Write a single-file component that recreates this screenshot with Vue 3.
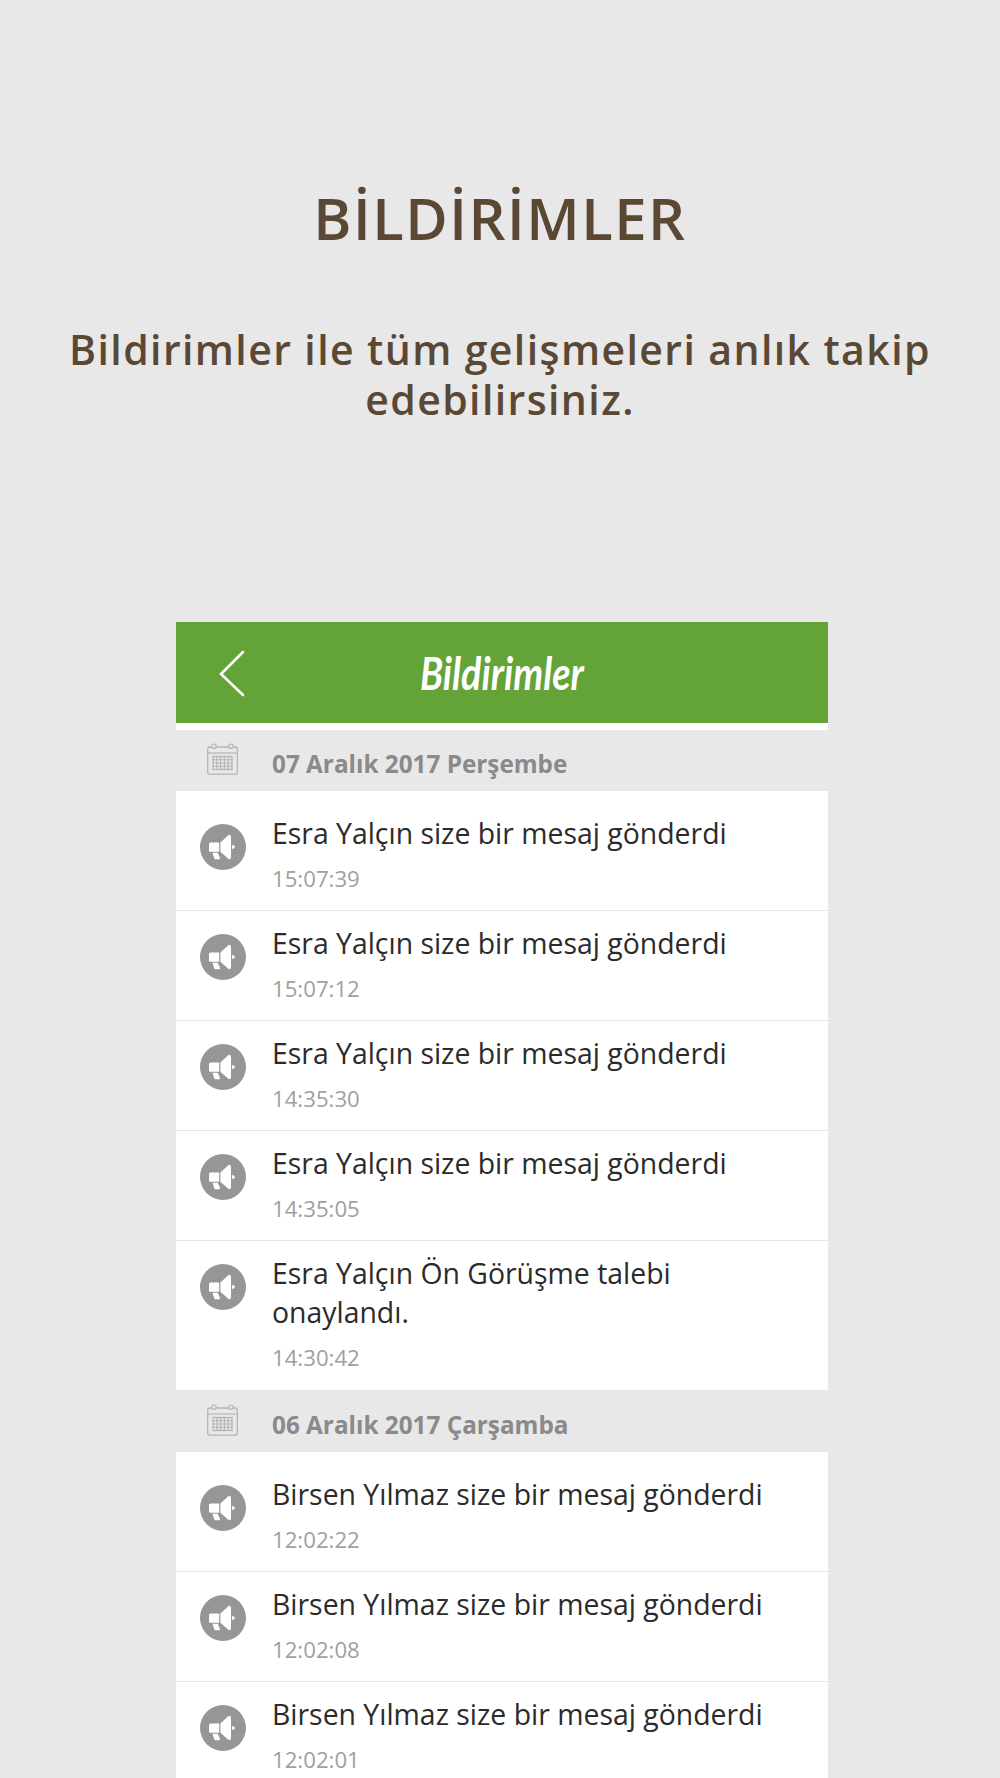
<script setup>
const groups = [
  {
    date: '07 Aralık 2017 Perşembe',
    items: [
      { text: 'Esra Yalçın size bir mesaj gönderdi', time: '15:07:39' },
      { text: 'Esra Yalçın size bir mesaj gönderdi', time: '15:07:12' },
      { text: 'Esra Yalçın size bir mesaj gönderdi', time: '14:35:30' },
      { text: 'Esra Yalçın size bir mesaj gönderdi', time: '14:35:05' },
      { text: 'Esra Yalçın Ön Görüşme talebi onaylandı.', time: '14:30:42' },
    ],
  },
  {
    date: '06 Aralık 2017 Çarşamba',
    items: [
      { text: 'Birsen Yılmaz size bir mesaj gönderdi', time: '12:02:22' },
      { text: 'Birsen Yılmaz size bir mesaj gönderdi', time: '12:02:08' },
      { text: 'Birsen Yılmaz size bir mesaj gönderdi', time: '12:02:01' },
    ],
  },
]
</script>

<template>
  <div class="page">
    <h1 class="title">BİLDİRİMLER</h1>
    <p class="subtitle">Bildirimler ile tüm gelişmeleri anlık takip edebilirsiniz.</p>
    <div class="phone">
      <header class="bar">
        <svg class="back" width="30" height="48" viewBox="0 0 30 48">
          <path d="M25 3 L3 25 L25 46" fill="none" stroke="#fff" stroke-width="2.6" stroke-linecap="round" stroke-linejoin="miter" />
        </svg>
        <span class="bar-title">Bildirimler</span>
      </header>
      <section v-for="g in groups" :key="g.date">
        <div class="date">
          <svg class="cal" width="31" height="32" viewBox="0 0 31 32" fill="none" stroke="#b4b4b6">
            <path d="M3 4 H28 Q30.4 4 30.4 6.5 V29 Q30.4 31.2 28 31.2 H3 Q0.7 31.2 0.7 29 V6.5 Q0.7 4 3 4 Z" stroke-width="1.3" />
            <path d="M0.7 10 H30.4" stroke-width="1.2" />
            <circle cx="7" cy="3.2" r="2.2" fill="#e8e8e9" stroke-width="1.2" />
            <circle cx="24" cy="3.2" r="2.2" fill="#e8e8e9" stroke-width="1.2" />
            <rect x="6" y="13.5" width="19" height="13" stroke-width="1.3" />
            <path d="M6 16.75 H25 M6 20 H25 M6 23.25 H25 M9.8 13.5 V26.5 M13.6 13.5 V26.5 M17.4 13.5 V26.5 M21.2 13.5 V26.5" stroke-width="1.1" />
          </svg>
          <span class="date-text">{{ g.date }}</span>
        </div>
        <div class="list">
          <article v-for="(it, i) in g.items" :key="i" class="row">
            <span class="badge">
              <svg width="46" height="46" viewBox="-23 -23 46 46">
                <path d="M-12.5 -4.5 H-3.8 V4.8 H-12.5 Q-14 4.8 -14 3.4 V-3 Q-14 -4.5 -12.5 -4.5 Z" fill="#fff" />
                <path d="M-2.6 -4.5 L5 -11.5 Q7.4 -13.2 8 -10.5 V10.5 Q7.4 13.2 5 11.5 L-2.6 4.8 Z" fill="#fff" />
                <path d="M9 -2 Q12 -1.6 12 0 Q12 1.6 9 2 Z" fill="#fff" />
                <path d="M-10.5 5.8 H-5.2 L-3 11 Q-2.8 12.2 -4 12.2 H-7.6 Q-8.6 12.2 -8.8 11.2 Z" fill="#fff" />
              </svg>
            </span>
            <div class="body">
              <div class="text">{{ it.text }}</div>
              <div class="time">{{ it.time }}</div>
            </div>
          </article>
        </div>
      </section>
    </div>
  </div>
</template>

<style>
html, body { margin: 0; height: 1778px; overflow: hidden; background: #e8e8e9; }
</style>

<style scoped>
.page {
  height: 1778px;
  overflow: hidden;
  background: #e8e8e9;
  font-family: "Open Sans", sans-serif;
  display: flex;
  flex-direction: column;
  align-items: center;
}
.title {
  margin: 175px 0 0;
  font-size: 58px;
  line-height: 86px;
  font-weight: 600;
  letter-spacing: 1.5px;
  color: #5a4835;
}
.subtitle {
  margin: 63px 0 0;
  width: 900px;
  text-align: center;
  font-size: 41px;
  line-height: 50px;
  font-weight: 600;
  letter-spacing: 1.4px;
  color: #5a4835;
}
.phone {
  margin-top: 198px;
  margin-left: 4px;
  width: 652px;
  flex: none;
}
.bar {
  height: 101px;
  background: #63a337;
  border-bottom: 7px solid #fff;
  display: flex;
  align-items: center;
  justify-content: center;
  position: relative;
}
.back { position: absolute; left: 42px; top: 27px; }
.bar-title {
  display: inline-block;
  font-family: "Lato", sans-serif;
  font-style: italic;
  font-weight: 700;
  font-size: 46px;
  color: #fff;
  transform: scaleX(0.82);
}
.date {
  height: 61px;
  display: flex;
  align-items: center;
  padding-left: 31px;
  gap: 34px;
  background: #e8e8e9;
}
.cal { flex: none; margin-top: -4px; }
.date-text {
  font-size: 24.3px;
  font-weight: 700;
  color: #8a8a8a;
  position: relative;
  top: 3px;
}
.list { background: #fff; }
.row {
  display: flex;
  align-items: flex-start;
  padding: 13px 0 15px 24px;
  border-bottom: 1px solid #e6e6e6;
  gap: 26px;
}
.row:first-child { padding-top: 23px; }
.row:last-child { padding-bottom: 16px; }
.badge {
  flex: none;
  width: 46px;
  height: 46px;
  margin-top: 10px;
  border-radius: 50%;
  background: #969696;
}
.badge svg { display: block; }
.body { flex: 1; padding-right: 30px; }
.text {
  font-size: 28.4px;
  line-height: 39px;
  color: #2b2b2b;
}
.time {
  margin-top: 10px;
  font-size: 22.2px;
  line-height: 32px;
  color: #a0a0a0;
}
</style>
